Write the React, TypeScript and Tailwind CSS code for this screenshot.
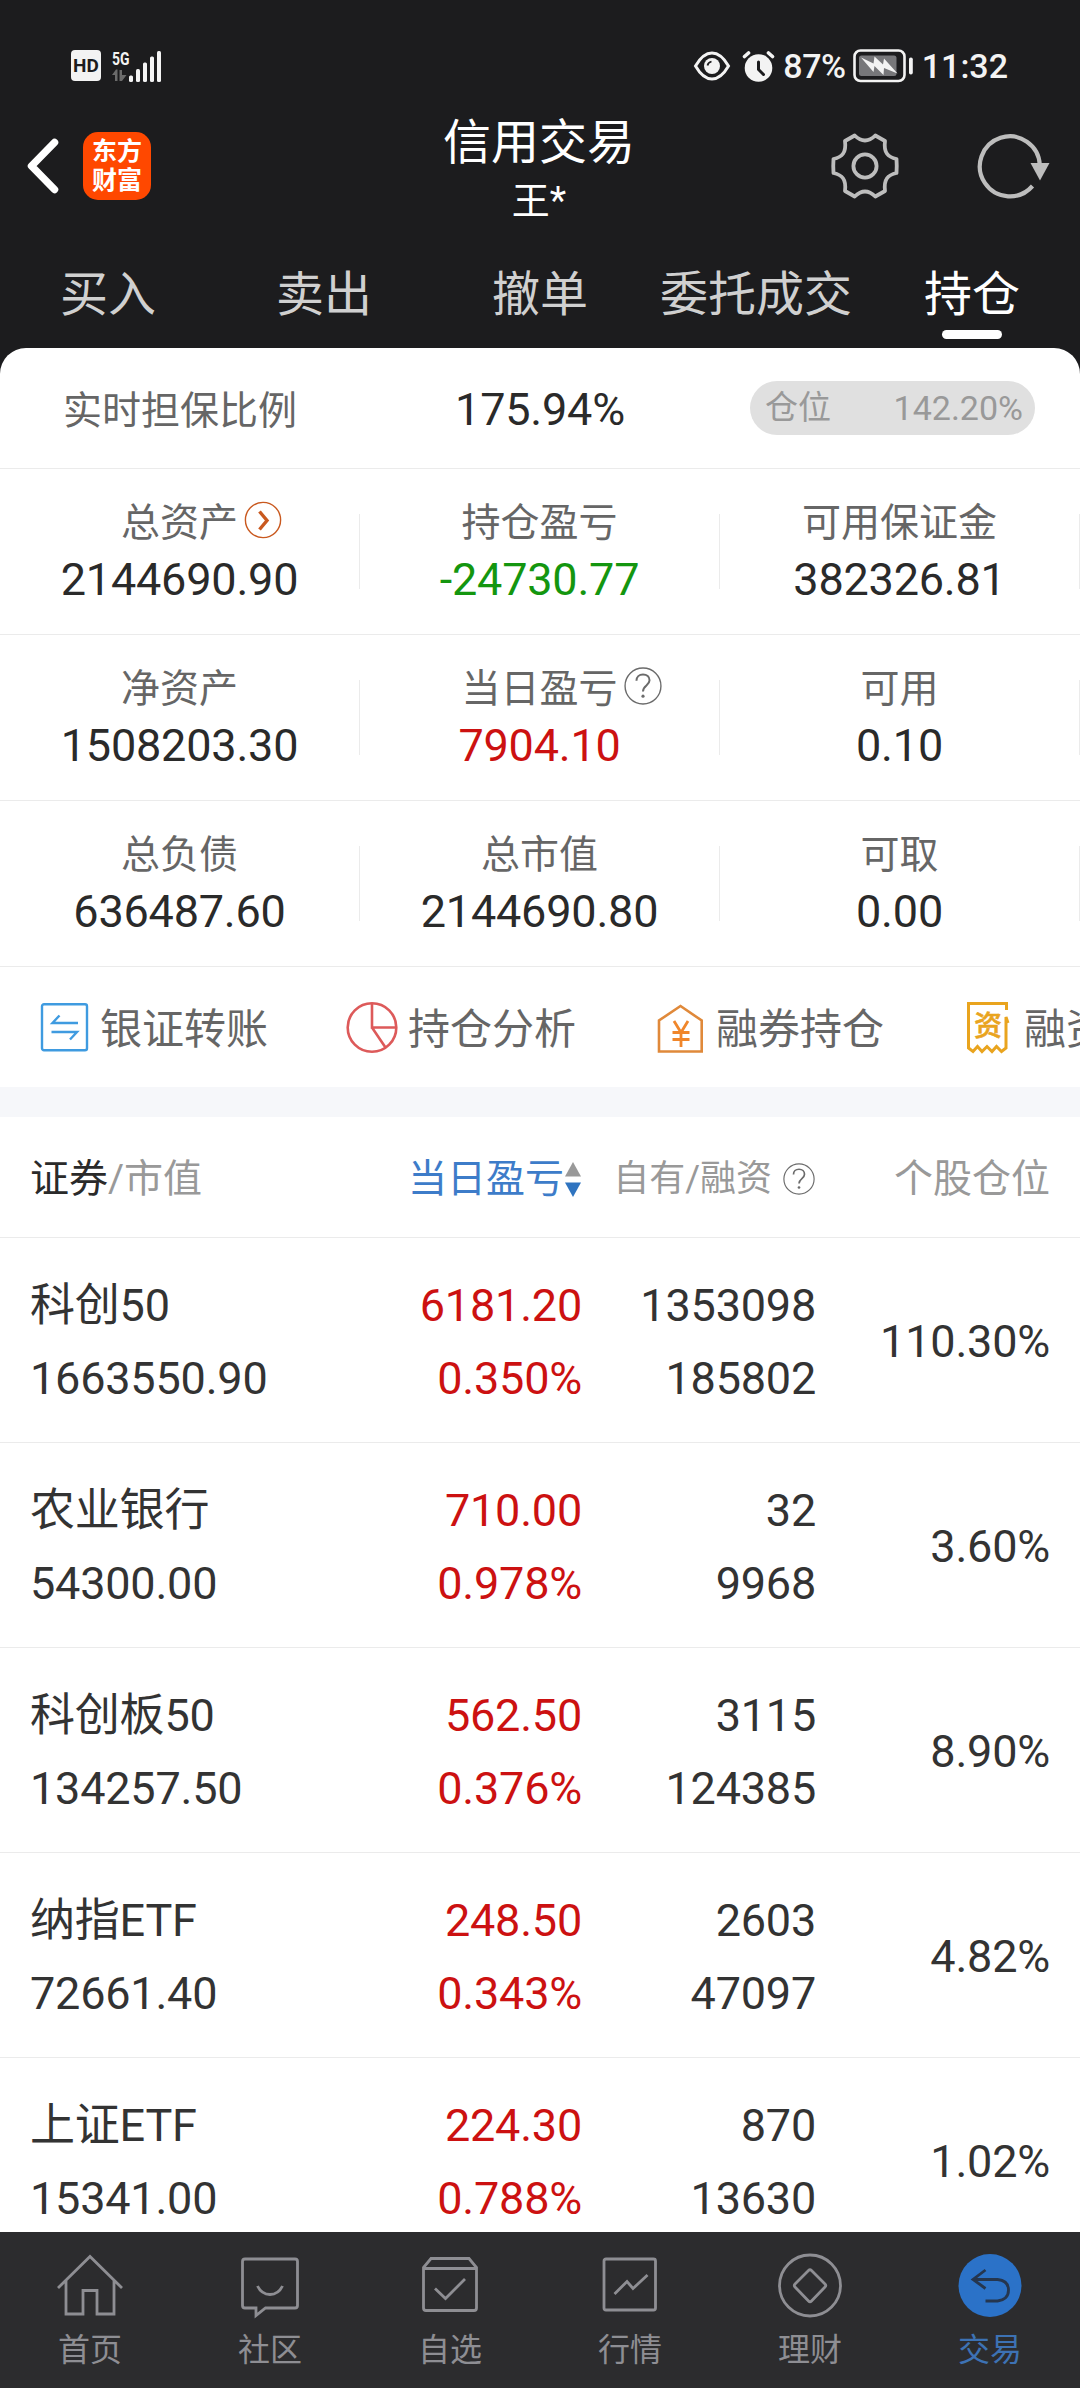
import React from 'react';
import clsx from 'clsx';

interface Holding {
  name: string;
  value: string;
  profit: string;
  rate: string;
  own: string;
  margin: string;
  position: string;
}

interface Asset {
  label: string;
  value: string;
  color?: string;
  icon?: React.ReactNode;
}

const QuestionIcon = ({ size }: { size: number }) => (
  <svg width={size} height={size} viewBox="0 0 36 36" fill="none" stroke="#6b6b6b" strokeWidth="1.3">
    <circle cx="18" cy="18" r="17" />
    <path d="M11.8 13c0-3.6 2.6-6 6.200-6s6.200 2.300 6.200 5.600c0 5-6.200 4.900-6.200 10.600" strokeWidth="1.9" />
    <circle cx="18" cy="27.6" r="1.5" fill="#6b6b6b" stroke="none" />
  </svg>
);

const ArrowCircle = () => (
  <svg width="38" height="38" viewBox="0 0 38 38" fill="none" stroke="#c9591f">
    <circle cx="19" cy="19" r="17.6" strokeWidth="1.4" />
    <path d="M15.5 10.5l7.500 9-7.500 9" strokeWidth="3.4" />
  </svg>
);

const tabs = ['买入', '卖出', '撤单', '委托成交', '持仓'];

const assets: Asset[][] = [
  [
    { label: '总资产', value: '2144690.90', icon: <ArrowCircle /> },
    { label: '持仓盈亏', value: '-24730.77', color: 'text-[#14960f]' },
    { label: '可用保证金', value: '382326.81' },
  ],
  [
    { label: '净资产', value: '1508203.30' },
    { label: '当日盈亏', value: '7904.10', color: 'text-[#cc1111]', icon: <QuestionIcon size={38} /> },
    { label: '可用', value: '0.10' },
  ],
  [
    { label: '总负债', value: '636487.60' },
    { label: '总市值', value: '2144690.80' },
    { label: '可取', value: '0.00' },
  ],
];

const holdings: Holding[] = [
  { name: '科创50', value: '1663550.90', profit: '6181.20', rate: '0.350%', own: '1353098', margin: '185802', position: '110.30%' },
  { name: '农业银行', value: '54300.00', profit: '710.00', rate: '0.978%', own: '32', margin: '9968', position: '3.60%' },
  { name: '科创板50', value: '134257.50', profit: '562.50', rate: '0.376%', own: '3115', margin: '124385', position: '8.90%' },
  { name: '纳指ETF', value: '72661.40', profit: '248.50', rate: '0.343%', own: '2603', margin: '47097', position: '4.82%' },
  { name: '上证ETF', value: '15341.00', profit: '224.30', rate: '0.788%', own: '870', margin: '13630', position: '1.02%' },
];

const shortcuts = [
  {
    label: '银证转账',
    icon: (
      <svg width="52" height="54" viewBox="0 0 52 54" fill="none" stroke="#3f9be0" strokeWidth="2.4">
        <rect x="4" y="4.2" width="45" height="46" rx="2" />
        <path d="M40 23H14.500l7-7.5M13.500 32H39l-7 7.500" />
      </svg>
    ),
  },
  {
    label: '持仓分析',
    icon: (
      <svg width="52" height="54" viewBox="0 0 52 54" fill="none" stroke="#dd5a5a" strokeWidth="2.6">
        <circle cx="26" cy="27.500" r="24.300" />
        <path d="M26 3v24.500h24.300M26 27.500l13.500 20" />
      </svg>
    ),
  },
  {
    label: '融券持仓',
    icon: (
      <svg width="52" height="54" viewBox="0 0 52 54" fill="none" stroke="#e0893a" strokeWidth="2.600">
        <path d="M5 51.500V20.500L26.500 6l21.200 14.500v31z" />
        <path d="M20 21l7 11.500L34 21M27 32.500V47M18.500 32.500h17M18.500 39.500h17" stroke="#f0862a" strokeWidth="2.800" />
      </svg>
    ),
  },
  {
    label: '融资持仓',
    icon: (
      <svg width="52" height="54" viewBox="0 0 52 54" fill="none" stroke="#e9a41e" strokeWidth="3">
        <path d="M44.500 10V3.500H6.500V48l4.500 3.500 4.500-5 4.500 5 5-5 5 5 4.500-5 5 5 4.500-3.500V17l2 6" />
        <text x="26" y="36" textAnchor="middle" fontSize="28" fontWeight="500" fill="#e9a41e" stroke="#e9a41e" strokeWidth="0.6">资</text>
      </svg>
    ),
  },
];

const navs = [
  {
    label: '首页',
    icon: <path d="M4 36L36 4.500 68 36M12 28.500V62h17V38.500h14V62h17V28.500" />,
  },
  {
    label: '社区',
    icon: (
      <>
        <path d="M11 7h50q2.500 0 2.500 2.500v44q0 2.500-2.500 2.500H31.500l-9.500 7.500V56H11q-2.500 0-2.500-2.500v-44Q8.500 7 11 7z" />
        <path d="M23.500 34q4 8.500 12.500 8.500T48.500 34" />
      </>
    ),
  },
  {
    label: '自选',
    icon: (
      <>
        <path d="M17 6.500h38l7.500 9V56q0 2.500-2.500 2.500H12q-2.500 0-2.500-2.500V15.500zM9.500 16.500h53" />
        <path d="M21 36.500L31.500 46.500 51 27" />
      </>
    ),
  },
  {
    label: '行情',
    icon: (
      <>
        <rect x="10" y="7" width="51.500" height="51" rx="2" />
        <path d="M20.500 42L33 29.500l6 7L53.500 23" />
      </>
    ),
  },
  {
    label: '理财',
    icon: (
      <>
        <circle cx="36" cy="33.500" r="30.500" />
        <path d="M34.500 18.500q1.500-1.500 3 0L51 32q1.500 1.500 0 3L37.500 49q-1.500 1.500-3 0L21 35q-1.500-1.500 0-3z" />
      </>
    ),
  },
  {
    label: '交易',
    active: true,
    icon: (
      <>
        <circle cx="36" cy="33.500" r="31.500" fill="#2b72c8" stroke="none" />
        <path d="M31.500 18L19 27.500l12.500 9M19.500 27.500h24q11 1 11 10.500t-11 11H31.500" stroke="#25364f" strokeWidth="2.800" />
      </>
    ),
  },
];

function StatusBar() {
  return (
    <div className="h-[99px] pt-[32px] pl-[71px] pr-[72px] flex items-center justify-between text-[#f3f3f3]">
      <div className="flex items-center gap-[9px]">
        <div className="w-[30px] h-[31px] rounded-[4px] bg-[#f3f3f3] text-[#1c1c1e] text-[19px] leading-[31px] font-bold text-center">HD</div>
        <svg width="53" height="44" viewBox="0 -6 53 44" fill="#f3f3f3">
          <text x="2" y="14.500" fontSize="19" fontWeight="700" textLength="17.500" lengthAdjust="spacingAndGlyphs">5G</text>
          <path d="M2 25l4-5.500h1.500V31H5v-6zM9.500 20H12v5h4.500L12 31H9.500z" fill="#6b6b6b" />
          <rect x="19" y="25.500" width="4" height="6.500" rx="1.500" />
          <rect x="26" y="19" width="4" height="13" rx="1.500" />
          <rect x="33" y="12.500" width="4" height="19.500" rx="1.500" />
          <rect x="40" y="6.500" width="4" height="25.500" rx="1.500" />
          <rect x="47" y="1" width="4" height="31" rx="1.500" />
        </svg>
      </div>
      <div className="flex items-center">
        <svg width="38" height="32" viewBox="0 0 38 32" fill="none" stroke="#f3f3f3" strokeWidth="3">
          <path d="M2.500 16Q10 3 19 3t16.500 13Q28 29 19 29T2.500 16z" />
          <circle cx="19" cy="16" r="8" fill="#f3f3f3" stroke="none" />
          <path d="M14.500 15.500q.5-3 4-4" stroke="#1c1c1e" strokeWidth="1.800" />
        </svg>
        <svg className="ml-[11px]" width="33" height="32" viewBox="0 0 33 32" fill="none" stroke="#f3f3f3" strokeWidth="3.600" strokeLinecap="round">
          <circle cx="16.500" cy="18" r="13.800" fill="#f3f3f3" stroke="none" />
          <path d="M2.500 6.500L6.500 3M30.500 6.500L26.500 3" />
          <path d="M16.500 12v7.500l5 5" stroke="#1c1c1e" strokeWidth="3" />
        </svg>
        <span className="ml-[8px] text-[34px] leading-[34px] font-medium tracking-[-0.4px]">87%</span>
        <svg className="ml-[7px]" width="61" height="34" viewBox="0 0 61 34" fill="none">
          <rect x="1.500" y="1.500" width="50" height="30.500" rx="6" stroke="#f3f3f3" strokeWidth="2.600" />
          <rect x="6" y="6.500" width="37.500" height="20.500" rx="2.500" fill="#77777a" />
          <path d="M8 8.500l12.500 14.500 1-6 9 9 .5-7 13.500 5.500L31 9.500l-1 6-8.500-8-1 7z" fill="#f3f3f3" />
          <rect x="56" y="8.500" width="3.800" height="17" rx="1.800" fill="#f3f3f3" />
        </svg>
        <span className="ml-[8px] text-[34px] leading-[34px] font-medium">11:32</span>
      </div>
    </div>
  );
}

function Header() {
  return (
    <header className="h-[134px] flex items-center justify-between pl-[25px] pr-[30px]">
      <div className="w-[300px] flex items-center gap-[24px]">
        <svg width="34" height="58" viewBox="0 0 34 58" fill="none" stroke="#fff" strokeWidth="7.500" strokeLinecap="round">
          <path d="M29.500 5.500L6.500 29l23 23.500" strokeLinejoin="round" />
        </svg>
        <div className="w-[68px] h-[68px] rounded-[15px] bg-[#ff4800] text-white text-[25px] leading-[29px] font-bold flex flex-col items-center justify-center">
          <span>东方</span>
          <span>财富</span>
        </div>
      </div>
      <div className="text-center text-white pt-[9px] pl-[3px]">
        <h1 className="text-[48px] leading-[60px] font-normal">信用交易</h1>
        <p className="text-[38px] leading-[56px]">王*</p>
      </div>
      <div className="w-[300px] flex items-center justify-end gap-[77px]">
        <svg width="68" height="68" viewBox="-34 -34 68 68" fill="none" stroke="#bdbdbd" strokeWidth="3.800" strokeLinejoin="round">
          <path d="M-10.300 -30.500Q0 -20.500 10.300 -30.500L20 -25C18.500 -13 23 -9 31.500 -7Q32 0 31.500 7C23 9 18.500 13 20 25L10.300 30.500Q0 20.500 -10.300 30.500L-20 25C-18.500 13 -23 9 -31.500 7Q-32 0 -31.500 -7C-23 -9 -18.500 -13 -20 -25Z" />
          <circle r="11.600" />
        </svg>
        <svg width="74" height="68" viewBox="-34 -34 74 68" fill="none" stroke="#bdbdbd" strokeWidth="4.200">
          <path d="M22.500 20A30 30 0 1 1 29.800 -1" />
          <path d="M20.500 -3h19L30 14.500z" fill="#bdbdbd" stroke="none" />
        </svg>
      </div>
    </header>
  );
}

export default function App() {
  return (
    <div className="w-[1080px] h-[2388px] flex flex-col overflow-hidden bg-[#1c1c1e] text-[#2a2a2a] font-['Roboto','Noto_Sans_CJK_SC',sans-serif]">
      <StatusBar />
      <Header />

      {/* Trade tabs */}
      <nav className="h-[115px] shrink-0 grid grid-cols-5 text-[48px] leading-[60px] text-[#d0d0d0]">
        {tabs.map((tab) => (
          <div key={tab} className={clsx('pt-[32px] flex flex-col items-center whitespace-nowrap', tab === '持仓' && 'text-white')}>
            {tab}
            {tab === '持仓' && <span className="mt-[5px] w-[60px] h-[9px] rounded-full bg-white" />}
          </div>
        ))}
      </nav>

      <main className="flex-1 min-h-0 overflow-hidden bg-white rounded-t-[26px]">
        <div className="h-[121px] grid grid-cols-3 items-center border-b border-[#ebebeb]">
          <span className="pt-[5px] text-center text-[39px] leading-[56px] text-[#666]">实时担保比例</span>
          <span className="pt-[4px] text-center text-[45px] leading-[56px] tracking-[-0.2px]">175.94%</span>
          <div className="ml-[30px] w-[285px] h-[54px] pl-[15px] pr-[12px] rounded-full bg-[#e0e0e0] text-[#999] flex items-center justify-between">
            <span className="text-[33px]">仓位</span>
            <span className="text-[34px]">142.20%</span>
          </div>
        </div>

        {/* Asset summary */}
        {assets.map((row, i) => (
          <div key={i} className="h-[166px] grid grid-cols-3 items-center border-b border-[#ebebeb]">
            {row.map((asset) => (
              <div key={asset.label} className="h-[75px] flex flex-col items-center justify-center border-r border-[#ebebeb]">
                <div className="relative text-[39px] leading-[56px] text-[#666]">
                  {asset.label}
                  {asset.icon && <span className="absolute left-full top-[6px] ml-[6px]">{asset.icon}</span>}
                </div>
                <div className={clsx('text-[45px] leading-[57px] tracking-[-0.2px]', asset.color)}>{asset.value}</div>
              </div>
            ))}
          </div>
        ))}

        {/* Shortcuts, scrolls off to the right */}
        <div className="h-[120px] pl-[38px] flex items-center overflow-hidden">
          {shortcuts.map((item) => (
            <div key={item.label} className="w-[308px] shrink-0 flex items-center gap-[10px] text-[42px] leading-[60px] text-[#666] whitespace-nowrap">
              <span className="shrink-0">{item.icon}</span>
              <span className="pt-[5px]">{item.label}</span>
            </div>
          ))}
        </div>

        <div className="h-[30px] bg-[#f6f7fa]" />

        <div className="h-[121px] pt-[4px] px-[30px] flex items-center text-[39px] leading-[56px] text-[#999] border-b border-[#ebebeb]">
          <div className="w-[300px]"><span className="text-[#2a2a2a]">证券</span>/市值</div>
          <div className="w-[251px] flex items-center justify-end gap-[1px] text-[#3d7cc9]">
            当日盈亏
            <svg width="16" height="36" viewBox="0 0 16 36">
              <path d="M8 1l8 14.500H0z" fill="#999" />
              <path d="M0 21.500h16L8 36z" fill="#2f74c0" />
            </svg>
          </div>
          <div className="w-[234px] flex items-center justify-end gap-[11px] text-[36px]">
            自有/融资
            <QuestionIcon size={32} />
          </div>
          <div className="flex-1 text-right">个股仓位</div>
        </div>

        {/* Holdings */}
        {holdings.map((h) => (
          <div key={h.name} className="h-[205px] px-[30px] flex items-center text-[45px] leading-[73px] tracking-[-0.2px] text-[#333] border-b border-[#ebebeb]">
            <div className="w-[270px] pt-[4px]">
              <div>{h.name}</div>
              <div>{h.value}</div>
            </div>
            <div className="w-[282px] pt-[4px] text-right text-[#cc1111]">
              <div>{h.profit}</div>
              <div>{h.rate}</div>
            </div>
            <div className="w-[234px] pt-[4px] text-right">
              <div>{h.own}</div>
              <div>{h.margin}</div>
            </div>
            <div className="flex-1 pt-[2px] text-right">{h.position}</div>
          </div>
        ))}
      </main>

      {/* Bottom navigation */}
      <footer className="h-[156px] shrink-0 grid grid-cols-6 bg-[#2c2c2e] text-[#8e8e93]">
        {navs.map((nav) => (
          <div key={nav.label} className="pt-[20px] flex flex-col items-center">
            <svg width="72" height="68" viewBox="0 0 72 68" fill="none" stroke="#8e8e93" strokeWidth="2.800">
              {nav.icon}
            </svg>
            <span className={clsx('mt-[9px] text-[32px] leading-[42px]', nav.active && 'text-[#3d72b4]')}>{nav.label}</span>
          </div>
        ))}
      </footer>
    </div>
  );
}
